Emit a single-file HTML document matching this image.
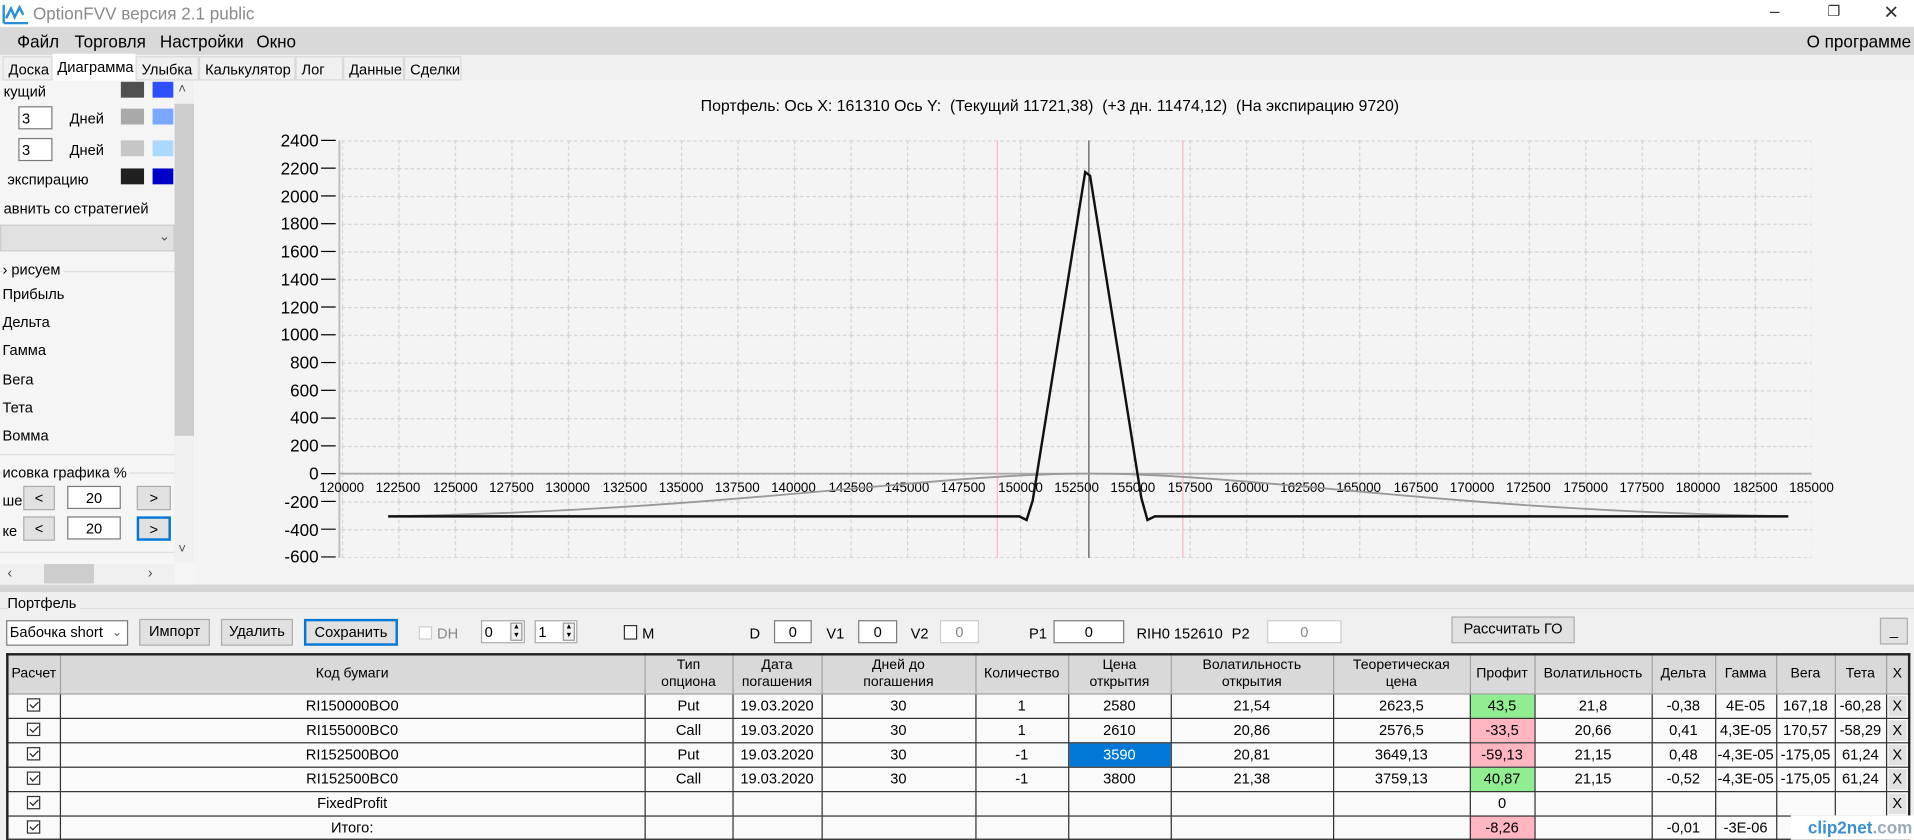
<!DOCTYPE html>
<html><head><meta charset="utf-8">
<style>
*{box-sizing:border-box;margin:0;padding:0}
html,body{width:1914px;height:839px;overflow:hidden;background:#f0f0f0}
body{font-family:"Liberation Sans",sans-serif;color:#000}
#w{position:absolute;left:0;top:0;width:1568px;height:688px;transform:scale(1.2207);transform-origin:0 0;overflow:hidden}
.a{position:absolute;white-space:nowrap}
.t{font-size:12px;white-space:nowrap}
.btn{position:absolute;background:#e1e1e1;border:1px solid #adadad;font-size:12px;text-align:center;line-height:19px}
.box{position:absolute;background:#fff;border:1px solid #7a7a7a;font-size:12px;text-align:center;line-height:18px}
table{border-collapse:collapse;position:absolute;left:5px;top:535px;font-size:12px;table-layout:fixed;border:2px solid #222}
td,th{border:1px solid #333;text-align:center;height:20px;padding:0;overflow:hidden;white-space:nowrap;font-weight:normal;background:#fafafa}
th{background:#d9d9d9;height:32px;line-height:14px;border-color:#a0a0a0;font-size:11.5px}
td.x{background:#e1e1e1;border:1px solid #333;box-shadow:inset 0 0 0 1px #fff}
.g{background:#90ee90 !important}.p{background:#ffb6c1 !important}
.cb{display:inline-block;width:11px;height:11px;border:1px solid #333;position:relative;top:1px;background:#fff}
.cb:after{content:"";position:absolute;left:3px;top:0px;width:3px;height:6px;border:solid #222;border-width:0 1.5px 1.5px 0;transform:rotate(45deg)}
</style></head><body><div id="w">
<div class="a" style="left:0;top:0;width:1568px;height:22px;background:#fff"></div>
<svg class="a" style="left:2px;top:3px" width="22" height="17"><path d="M1 16V1M1 16H21" stroke="#2a8fd6" stroke-width="2" fill="none"/><path d="M3 12L7 4L10 11L14 3L17 9" stroke="#2a8fd6" stroke-width="2" fill="none"/></svg>
<div class="a" style="left:27px;top:3px;font-size:14px;color:#8a8a8a">OptionFVV версия 2.1 public</div>
<div class="a" style="left:1450px;top:1px;font-size:14px;color:#333">–</div>
<div class="a" style="left:1497px;top:2px;font-size:12px;color:#333">❐</div>
<div class="a" style="left:1543px;top:1px;font-size:15px;color:#333">✕</div>
<div class="a" style="left:0;top:22px;width:1568px;height:23px;background:#d9d9d9"></div>
<div class="a" style="left:14px;top:26px;font-size:14px">Файл</div>
<div class="a" style="left:61px;top:26px;font-size:14px">Торговля</div>
<div class="a" style="left:131px;top:26px;font-size:14px">Настройки</div>
<div class="a" style="left:210px;top:26px;font-size:14px">Окно</div>
<div class="a" style="left:1480px;top:26px;font-size:14px">О программе</div>
<div class="a" style="left:0;top:45px;width:1568px;height:21px;background:#f0f0f0"></div>
<div class="a t" style="left:2px;top:46px;width:41px;height:20px;border:1px solid #d9d9d9;background:#f0f0f0;padding:3px 0 0 4px">Доска</div>
<div class="a t" style="left:43px;top:44px;width:68px;height:23px;background:#fff;padding:4px 0 0 4px">Диаграмма</div>
<div class="a t" style="left:111px;top:46px;width:52px;height:20px;border:1px solid #d9d9d9;padding:3px 0 0 4px">Улыбка</div>
<div class="a t" style="left:163px;top:46px;width:79px;height:20px;border:1px solid #d9d9d9;padding:3px 0 0 4px">Калькулятор</div>
<div class="a t" style="left:242px;top:46px;width:39px;height:20px;border:1px solid #d9d9d9;padding:3px 0 0 4px">Лог</div>
<div class="a t" style="left:281px;top:46px;width:50px;height:20px;border:1px solid #d9d9d9;padding:3px 0 0 4px">Данные</div>
<div class="a t" style="left:331px;top:46px;width:47px;height:20px;border:1px solid #d9d9d9;padding:3px 0 0 4px">Сделки</div>
<div class="a" style="left:0;top:66px;width:160px;height:413px;background:#f5f5f5"></div>
<div class="a" style="left:143px;top:66px;width:16px;height:395px;background:#f0f0f0"></div>
<div class="a" style="left:143px;top:85px;width:16px;height:272px;background:#cdcdcd"></div>
<div class="a" style="left:146px;top:67px;font-size:11px;color:#555">˄</div>
<div class="a" style="left:146px;top:444px;font-size:11px;color:#555">˅</div>
<div class="a" style="left:0;top:462px;width:143px;height:16px;background:#f0f0f0"></div>
<div class="a" style="left:36px;top:462px;width:41px;height:16px;background:#cdcdcd"></div>
<div class="a" style="left:6px;top:462px;font-size:12px;color:#555">‹</div>
<div class="a" style="left:121px;top:462px;font-size:12px;color:#555">›</div>
<div class="a t" style="left:3px;top:68px">кущий</div>
<div class="a" style="left:99px;top:67px;width:19px;height:13px;background:#505050"></div>
<div class="a" style="left:125px;top:67px;width:17px;height:13px;background:#2f4ffc"></div>
<div class="box" style="left:15px;top:87px;width:28px;height:19px;text-align:left;padding-left:2px">3</div>
<div class="a t" style="left:57px;top:90px">Дней</div>
<div class="a" style="left:99px;top:89px;width:19px;height:13px;background:#a9a9a9"></div>
<div class="a" style="left:125px;top:89px;width:17px;height:13px;background:#7aa7ff"></div>
<div class="box" style="left:15px;top:113px;width:28px;height:19px;text-align:left;padding-left:2px">3</div>
<div class="a t" style="left:57px;top:116px">Дней</div>
<div class="a" style="left:99px;top:115px;width:19px;height:13px;background:#c6c6c6"></div>
<div class="a" style="left:125px;top:115px;width:17px;height:13px;background:#aad8ff"></div>
<div class="a t" style="left:6px;top:140px">экспирацию</div>
<div class="a" style="left:99px;top:138px;width:19px;height:13px;background:#1f1f1f"></div>
<div class="a" style="left:125px;top:138px;width:17px;height:13px;background:#0000c8"></div>
<div class="a t" style="left:3px;top:164px">авнить со стратегией</div>
<div class="a" style="left:0;top:184px;width:143px;height:22px;background:#e1e1e1;border:1px solid #ccc"></div>
<div class="a" style="left:130px;top:187px;font-size:11px;color:#555">⌄</div>
<div class="a" style="left:0;top:222px;width:143px;height:1px;background:#ddd"></div>
<div class="a t" style="left:2px;top:214px;background:#f5f5f5;padding-right:2px">› рисуем</div>
<div class="a t" style="left:2px;top:234px">Прибыль</div>
<div class="a t" style="left:2px;top:257px">Дельта</div>
<div class="a t" style="left:2px;top:280px">Гамма</div>
<div class="a t" style="left:2px;top:304px">Вега</div>
<div class="a t" style="left:2px;top:327px">Тета</div>
<div class="a t" style="left:2px;top:350px">Вомма</div>
<div class="a" style="left:0;top:372px;width:143px;height:1px;background:#ddd"></div>
<div class="a" style="left:0;top:387px;width:143px;height:1px;background:#ddd"></div>
<div class="a t" style="left:2px;top:380px;background:#f5f5f5;padding-right:2px">исовка графика %</div>
<div class="a t" style="left:2px;top:403px">ше</div>
<div class="btn" style="left:19px;top:398px;width:26px;height:20px">&lt;</div>
<div class="box" style="left:55px;top:398px;width:44px;height:19px">20</div>
<div class="btn" style="left:112px;top:398px;width:28px;height:20px">&gt;</div>
<div class="a t" style="left:2px;top:428px">ке</div>
<div class="btn" style="left:19px;top:423px;width:26px;height:20px">&lt;</div>
<div class="box" style="left:55px;top:423px;width:44px;height:19px">20</div>
<div class="btn" style="left:112px;top:423px;width:28px;height:20px;border:2px solid #0078d7">&gt;</div>
<div class="a" style="left:0;top:452px;width:143px;height:1px;background:#ddd"></div>
<div class="a" style="left:160px;top:66px;width:1408px;height:412px;background:#f4f4f4"></div>
<div class="a" style="left:574px;top:79px;font-size:13px;white-space:pre">Портфель: Ось X: 161310 Ось Y:  (Текущий 11721,38)  (+3 дн. 11474,12)  (На экспирацию 9720)</div>
<svg class="a" style="left:0;top:0" width="1568" height="480">
<defs><pattern id="gr" patternUnits="userSpaceOnUse" x="280" y="115" width="46.3" height="22.75">
<line x1="0.5" y1="0" x2="0.5" y2="22.75" stroke="#d3d3d3" stroke-dasharray="3,2"/>
<line x1="0" y1="0.5" x2="46.3" y2="0.5" stroke="#d3d3d3" stroke-dasharray="3,2"/></pattern></defs>
<rect x="280" y="115" width="1204" height="342" fill="url(#gr)"/>
<line x1="278" y1="115" x2="278" y2="457" stroke="#bbb" stroke-width="1.5"/>
<line x1="278" y1="388" x2="1484" y2="388" stroke="#aaa" stroke-width="1.5"/>
<g stroke="#000"><line x1="263" y1="115" x2="275" y2="115"/><line x1="263" y1="137.75" x2="275" y2="137.75"/><line x1="263" y1="160.5" x2="275" y2="160.5"/><line x1="263" y1="183.25" x2="275" y2="183.25"/><line x1="263" y1="206" x2="275" y2="206"/><line x1="263" y1="228.75" x2="275" y2="228.75"/><line x1="263" y1="251.5" x2="275" y2="251.5"/><line x1="263" y1="274.25" x2="275" y2="274.25"/><line x1="263" y1="297" x2="275" y2="297"/><line x1="263" y1="319.75" x2="275" y2="319.75"/><line x1="263" y1="342.5" x2="275" y2="342.5"/><line x1="263" y1="365.25" x2="275" y2="365.25"/><line x1="263" y1="388" x2="275" y2="388"/><line x1="263" y1="410.75" x2="275" y2="410.75"/><line x1="263" y1="433.5" x2="275" y2="433.5"/><line x1="263" y1="456.25" x2="275" y2="456.25"/></g>
<g font-family="Liberation Sans" font-size="14" text-anchor="end"><text x="261" y="120">2400</text><text x="261" y="143">2200</text><text x="261" y="166">2000</text><text x="261" y="188">1800</text><text x="261" y="211">1600</text><text x="261" y="234">1400</text><text x="261" y="257">1200</text><text x="261" y="279">1000</text><text x="261" y="302">800</text><text x="261" y="325">600</text><text x="261" y="347">400</text><text x="261" y="370">200</text><text x="261" y="393">0</text><text x="261" y="416">-200</text><text x="261" y="439">-400</text><text x="261" y="461">-600</text></g>
<g font-family="Liberation Sans" font-size="11" text-anchor="middle"><text x="280" y="403">120000</text><text x="326" y="403">122500</text><text x="373" y="403">125000</text><text x="419" y="403">127500</text><text x="465" y="403">130000</text><text x="512" y="403">132500</text><text x="558" y="403">135000</text><text x="604" y="403">137500</text><text x="650" y="403">140000</text><text x="697" y="403">142500</text><text x="743" y="403">145000</text><text x="789" y="403">147500</text><text x="836" y="403">150000</text><text x="882" y="403">152500</text><text x="928" y="403">155000</text><text x="975" y="403">157500</text><text x="1021" y="403">160000</text><text x="1067" y="403">162500</text><text x="1113" y="403">165000</text><text x="1160" y="403">167500</text><text x="1206" y="403">170000</text><text x="1252" y="403">172500</text><text x="1299" y="403">175000</text><text x="1345" y="403">177500</text><text x="1391" y="403">180000</text><text x="1438" y="403">182500</text><text x="1484" y="403">185000</text></g>
<line x1="817" y1="115" x2="817" y2="457" stroke="#ffb6c1"/>
<line x1="969" y1="115" x2="969" y2="457" stroke="#ffb6c1"/>
<line x1="892" y1="115" x2="892" y2="457" stroke="#555"/>
<path d="M318,423 C600,418 760,388 892,388 C1030,388 1180,418 1465,423" stroke="#999" stroke-width="1.5" fill="none"/>
<path d="M318,423 L835,423 L841,426 L846,410 L889,141 L893,144 L935,408 L940,426 L946,423 L1465,423" stroke="#111" stroke-width="2" fill="none"/>
</svg>
<div class="a" style="left:0;top:479px;width:1568px;height:6px;background:#d4d4d4"></div>
<div class="a" style="left:0;top:498px;width:1568px;height:1px;background:#ddd"></div>
<div class="a t" style="left:6px;top:487px;background:#f0f0f0;padding-right:3px">Портфель</div>
<div class="box" style="left:5px;top:508px;width:100px;height:21px;text-align:left;padding-left:2px;line-height:19px">Бабочка short <span style="position:absolute;right:4px;color:#555;font-size:10px">⌄</span></div>
<div class="btn" style="left:114px;top:507px;width:58px;height:22px">Импорт</div>
<div class="btn" style="left:181px;top:507px;width:59px;height:22px">Удалить</div>
<div class="btn" style="left:249px;top:507px;width:77px;height:22px;border:2px solid #0078d7">Сохранить</div>
<div class="a" style="left:343px;top:513px;width:11px;height:11px;border:1px solid #ccc;background:#fff"></div>
<div class="a t" style="left:358px;top:512px;color:#888">DH</div>
<div class="box" style="left:394px;top:508px;width:36px;height:19px;text-align:left;padding-left:2px;border-color:#aaa">0</div>
<div class="a" style="left:418px;top:510px;width:10px;height:15px;border:1px solid #999;background:#f0f0f0;font-size:6px;line-height:7px;text-align:center">▲<br>▼</div>
<div class="box" style="left:438px;top:508px;width:35px;height:19px;text-align:left;padding-left:2px;border-color:#aaa">1</div>
<div class="a" style="left:461px;top:510px;width:10px;height:15px;border:1px solid #999;background:#f0f0f0;font-size:6px;line-height:7px;text-align:center">▲<br>▼</div>
<div class="a" style="left:511px;top:512px;width:11px;height:12px;border:1px solid #333;background:#fff"></div>
<div class="a t" style="left:526px;top:512px">M</div>
<div class="a t" style="left:614px;top:512px">D</div>
<div class="box" style="left:634px;top:508px;width:31px;height:19px">0</div>
<div class="a t" style="left:677px;top:512px">V1</div>
<div class="box" style="left:703px;top:508px;width:32px;height:19px">0</div>
<div class="a t" style="left:746px;top:512px">V2</div>
<div class="box" style="left:770px;top:508px;width:32px;height:19px;border-color:#ccc;color:#888">0</div>
<div class="a t" style="left:843px;top:512px">P1</div>
<div class="box" style="left:863px;top:508px;width:58px;height:19px">0</div>
<div class="a t" style="left:931px;top:512px">RIH0 152610</div>
<div class="a t" style="left:1009px;top:512px">P2</div>
<div class="box" style="left:1038px;top:508px;width:61px;height:19px;border-color:#ccc;color:#888">0</div>
<div class="btn" style="left:1189px;top:505px;width:101px;height:22px">Рассчитать ГО</div>
<div class="btn" style="left:1540px;top:506px;width:23px;height:22px">_</div>
<table>
<colgroup><col style="width:43px"><col style="width:479px"><col style="width:72px"><col style="width:73px"><col style="width:126px"><col style="width:76px"><col style="width:84px"><col style="width:133px"><col style="width:112px"><col style="width:53px"><col style="width:96px"><col style="width:52px"><col style="width:50px"><col style="width:48px"><col style="width:42px"><col style="width:19px"></colgroup>
<tr><th>Расчет</th><th>Код бумаги</th><th>Тип<br>опциона</th><th>Дата<br>погашения</th><th>Дней до<br>погашения</th><th>Количество</th><th>Цена<br>открытия</th><th>Волатильность<br>открытия</th><th>Теоретическая<br>цена</th><th>Профит</th><th>Волатильность</th><th>Дельта</th><th>Гамма</th><th>Вега</th><th>Тета</th><th>X</th></tr>
<tr><td><span class="cb"></span></td><td>RI150000BO0</td><td>Put</td><td>19.03.2020</td><td>30</td><td>1</td><td>2580</td><td>21,54</td><td>2623,5</td><td class="g">43,5</td><td>21,8</td><td>-0,38</td><td>4E-05</td><td>167,18</td><td>-60,28</td><td class="x">X</td></tr>
<tr><td><span class="cb"></span></td><td>RI155000BC0</td><td>Call</td><td>19.03.2020</td><td>30</td><td>1</td><td>2610</td><td>20,86</td><td>2576,5</td><td class="p">-33,5</td><td>20,66</td><td>0,41</td><td>4,3E-05</td><td>170,57</td><td>-58,29</td><td class="x">X</td></tr>
<tr><td><span class="cb"></span></td><td>RI152500BO0</td><td>Put</td><td>19.03.2020</td><td>30</td><td>-1</td><td style="background:#0078d7;color:#fff">3590</td><td>20,81</td><td>3649,13</td><td class="p">-59,13</td><td>21,15</td><td>0,48</td><td>-4,3E-05</td><td>-175,05</td><td>61,24</td><td class="x">X</td></tr>
<tr><td><span class="cb"></span></td><td>RI152500BC0</td><td>Call</td><td>19.03.2020</td><td>30</td><td>-1</td><td>3800</td><td>21,38</td><td>3759,13</td><td class="g">40,87</td><td>21,15</td><td>-0,52</td><td>-4,3E-05</td><td>-175,05</td><td>61,24</td><td class="x">X</td></tr>
<tr><td><span class="cb"></span></td><td>FixedProfit</td><td></td><td></td><td></td><td></td><td></td><td></td><td></td><td>0</td><td></td><td></td><td></td><td></td><td></td><td class="x">X</td></tr>
<tr><td><span class="cb"></span></td><td>Итого:</td><td></td><td></td><td></td><td></td><td></td><td></td><td></td><td class="p">-8,26</td><td></td><td>-0,01</td><td>-3E-06</td><td>-</td><td></td><td class="x"></td></tr>
</table>
<div class="a" style="left:1467px;top:668px;width:101px;height:20px;background:#fff;font-size:14px;color:#3a8fd0;font-weight:bold;padding:2px 0 0 14px">clip2net<span style="color:#9ab">.com</span></div>
</div></body></html>
